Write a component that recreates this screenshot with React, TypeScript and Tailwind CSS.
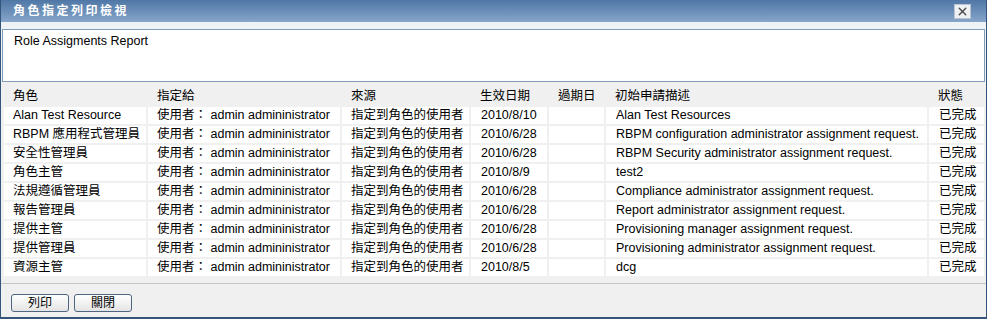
import { X } from "lucide-react"

const rows = [
  ["Alan Test Resource", "2010/8/10", "Alan Test Resources"],
  ["RBPM 應用程式管理員", "2010/6/28", "RBPM configuration administrator assignment request."],
  ["安全性管理員", "2010/6/28", "RBPM Security administrator assignment request."],
  ["角色主管", "2010/8/9", "test2"],
  ["法規遵循管理員", "2010/6/28", "Compliance administrator assignment request."],
  ["報告管理員", "2010/6/28", "Report administrator assignment request."],
  ["提供主管", "2010/6/28", "Provisioning manager assignment request."],
  ["提供管理員", "2010/6/28", "Provisioning administrator assignment request."],
  ["資源主管", "2010/8/5", "dcg"],
]

const font = { fontFamily: '"Liberation Sans", Arial, "Noto Sans CJK TC", sans-serif' }

export default function App() {
  return (
    <div style={font} className="w-[987px] h-[319px] flex flex-col border-x border-b-2 border-[#34567d] bg-[#f0f0f0] text-[12.5px] text-black">
      {/* title bar */}
      <div className="h-[22px] shrink-0 flex items-center justify-between pl-[12px] pr-[15px] bg-gradient-to-b from-[#4f77a6] to-[#87a6ca]">
        <span className="text-white font-bold tracking-[2.5px] text-[12px]">角色指定列印檢視</span>
        <div className="w-[17px] h-[15px] flex items-center justify-center bg-[#eef1f4] border border-[#b9c4d0]">
          <X size={13} strokeWidth={2.5} className="text-[#4a4a4a]" />
        </div>
      </div>
      <div className="h-[7px] shrink-0 bg-[#eef3f8]" />

      {/* report title box */}
      <div className="h-[53px] shrink-0 mx-[1px] bg-white border border-[#7f9db9] px-[11px] pt-[2px]">
        Role Assigments Report
      </div>

      {/* table */}
      <div className="pt-[4px] pl-[1px]">
        <table className="border-separate border-spacing-[2px] table-fixed">
          <colgroup>
            <col className="w-[142px]" />
            <col className="w-[192px]" />
            <col className="w-[127px]" />
            <col className="w-[76px]" />
            <col className="w-[55px]" />
            <col className="w-[321px]" />
            <col className="w-[55px]" />
          </colgroup>
          <thead>
            <tr className="h-[17px] text-left">
              {["角色", "指定給", "來源", "生效日期", "過期日", "初始申請描述", "狀態"].map((h) => (
                <th key={h} className="font-normal pl-[9px] p-0 leading-[17px]">{h}</th>
              ))}
            </tr>
          </thead>
          <tbody>
            {rows.map((r, i) => (
              <tr key={i} className="h-[17px]">
                <td className="bg-white pl-[9px] leading-[17px] whitespace-nowrap">{r[0]}</td>
                <td className="bg-white pl-[9px] leading-[17px] whitespace-nowrap">使用者： admin admininistrator</td>
                <td className="bg-white pl-[9px] leading-[17px] whitespace-nowrap">指定到角色的使用者</td>
                <td className="bg-white pl-[10px] leading-[17px] whitespace-nowrap">{r[1]}</td>
                <td className="bg-white" />
                <td className="bg-white pl-[10px] leading-[17px] whitespace-nowrap">{r[2]}</td>
                <td className="bg-white pl-[10px] leading-[17px] whitespace-nowrap">已完成</td>
              </tr>
            ))}
          </tbody>
        </table>
      </div>

      {/* footer */}
      <div className="mt-[5px] border-t border-[#c4c4c4] flex gap-[5px] pl-[10px] pt-[10px]">
        <button className="w-[58px] h-[18px] rounded-[3px] border border-[#4d6580] bg-gradient-to-b from-white to-[#e4e4e4] text-[12px] leading-none">列印</button>
        <button className="w-[58px] h-[18px] rounded-[3px] border border-[#4d6580] bg-gradient-to-b from-white to-[#e4e4e4] text-[12px] leading-none">關閉</button>
      </div>
    </div>
  )
}
